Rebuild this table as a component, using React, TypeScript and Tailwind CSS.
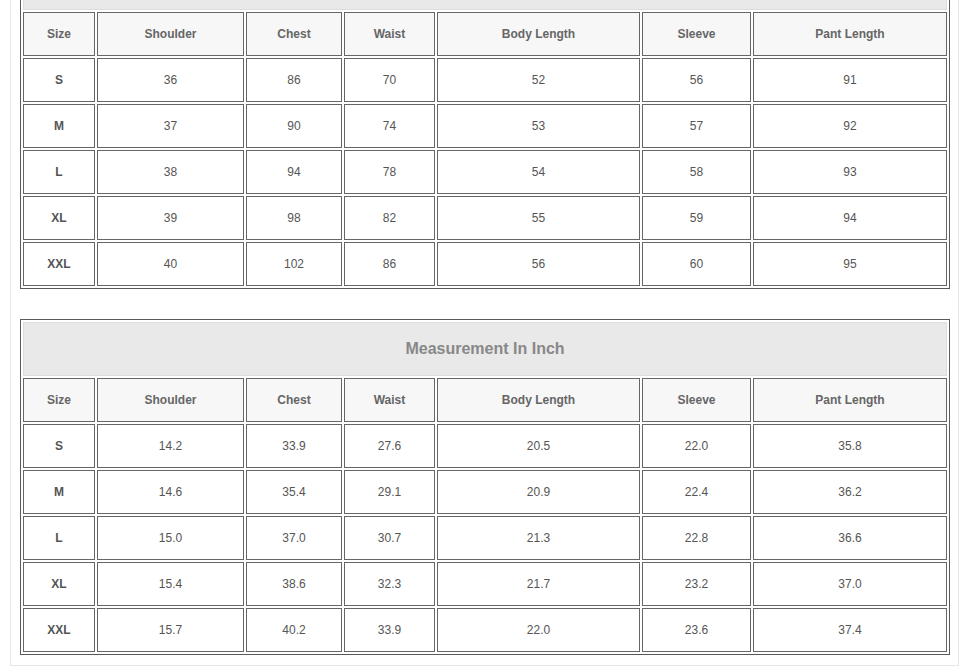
import React from "react";

const headers = ["Size", "Shoulder", "Chest", "Waist", "Body Length", "Sleeve", "Pant Length"];

const cm = [
  ["S", "36", "86", "70", "52", "56", "91"],
  ["M", "37", "90", "74", "53", "57", "92"],
  ["L", "38", "94", "78", "54", "58", "93"],
  ["XL", "39", "98", "82", "55", "59", "94"],
  ["XXL", "40", "102", "86", "56", "60", "95"],
];

const inch = [
  ["S", "14.2", "33.9", "27.6", "20.5", "22.0", "35.8"],
  ["M", "14.6", "35.4", "29.1", "20.9", "22.4", "36.2"],
  ["L", "15.0", "37.0", "30.7", "21.3", "22.8", "36.6"],
  ["XL", "15.4", "38.6", "32.3", "21.7", "23.2", "37.0"],
  ["XXL", "15.7", "40.2", "33.9", "22.0", "23.6", "37.4"],
];

function SizeTable({ title, rows, className }: { title: string; rows: string[][]; className?: string }) {
  return (
    <div
      className={
        "grid w-[930px] grid-cols-[72px_147px_96px_91px_203px_109px_194px] gap-[2px] border border-[#5a5a5a] p-[2px] " +
        (className ?? "")
      }
    >
      <div className="col-span-7 flex h-[54px] items-center justify-center border border-[#dcdcdc] bg-[#e9e9e9] text-[16px] font-bold text-[#888]">
        {title}
      </div>
      {headers.map((h) => (
        <div
          key={h}
          className="flex h-[44px] items-center justify-center border border-[#666] bg-[#f7f7f7] text-[12px] font-bold text-[#666]"
        >
          {h}
        </div>
      ))}
      {rows.map((r) =>
        r.map((v, i) => (
          <div
            key={r[0] + i}
            className={
              "flex h-[44px] items-center justify-center border border-[#666] bg-white text-[12px] text-[#555] " +
              (i === 0 ? "font-bold" : "")
            }
          >
            {v}
          </div>
        ))
      )}
    </div>
  );
}

export default function App() {
  return (
    <div className="h-[666px] w-[961px] overflow-hidden bg-white" style={{ fontFamily: '"Liberation Sans", Arial, sans-serif' }}>
      <div className="ml-[10px] w-[949px] border-x border-b border-[#e6e6e6] bg-white pb-[10px] pl-[9px]">
        <SizeTable title="Measurement In CM" rows={cm} className="-mt-[47px]" />
        <SizeTable title="Measurement In Inch" rows={inch} className="mt-[30px]" />
      </div>
    </div>
  );
}
